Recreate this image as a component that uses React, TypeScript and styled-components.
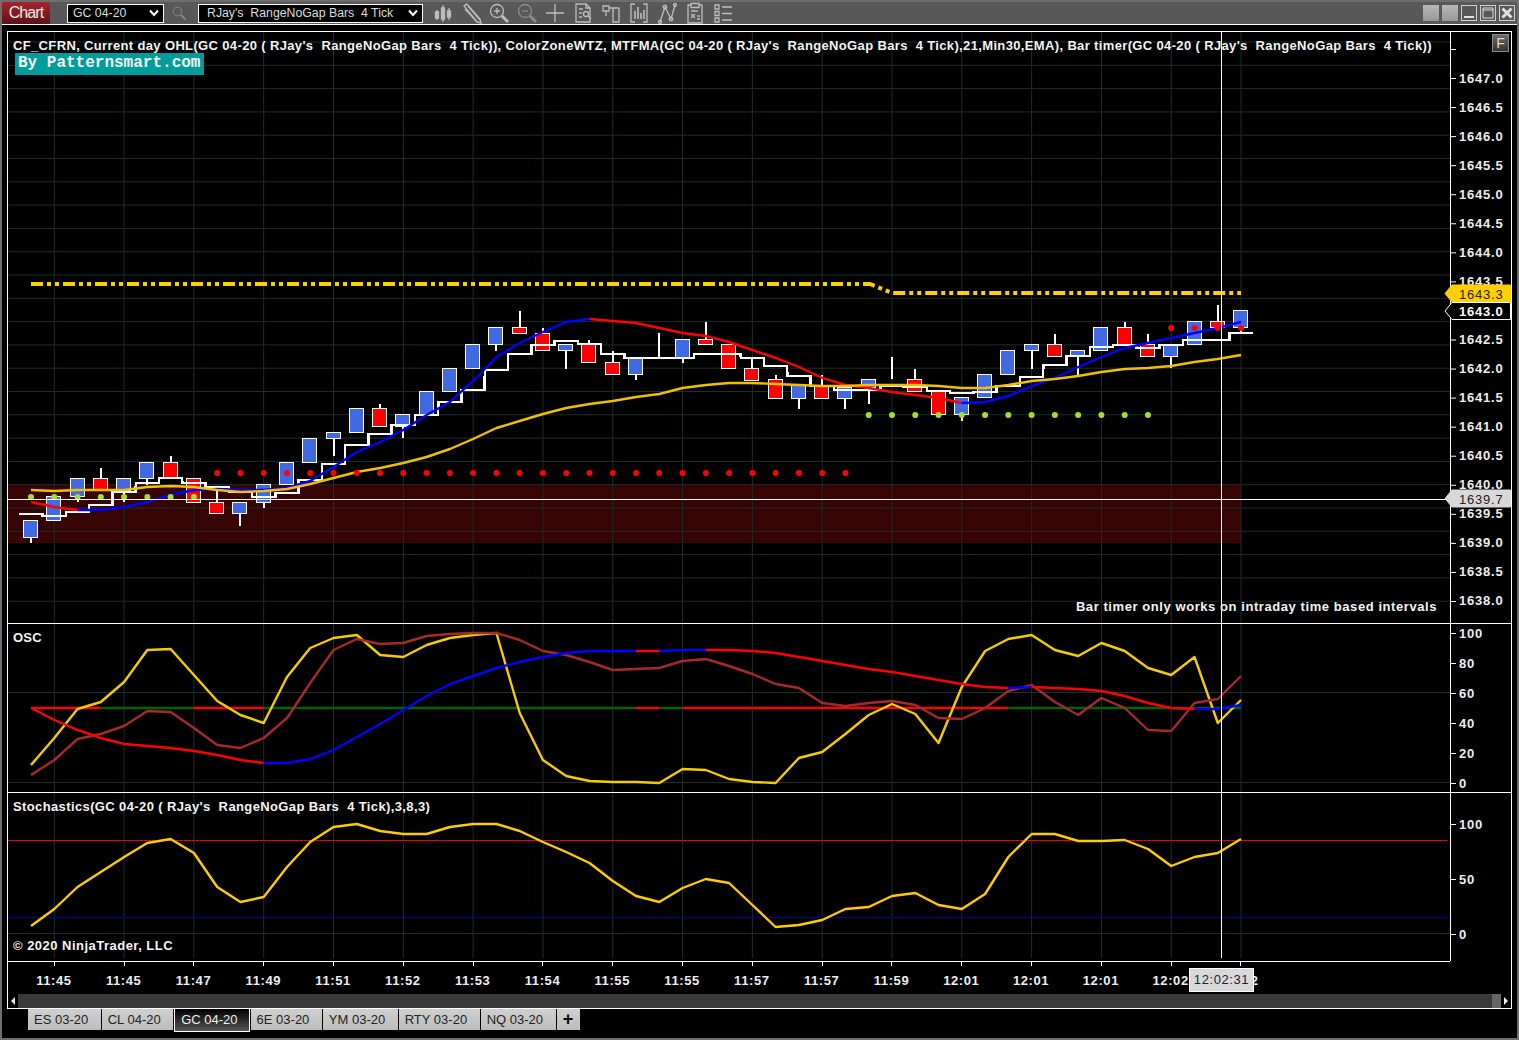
import React from 'react';
import styled, { createGlobalStyle } from 'styled-components';

const GlobalStyle = createGlobalStyle`
  html, body {
    margin: 0;
    padding: 0;
    background: #000;
    font-family: "Liberation Sans", Arial, sans-serif;
  }
`;

// bars sit every 23.27px, the grid and the time labels every third bar
const bx = (i: number) => 31 + 23.27 * i;
const gridXs = Array.from({ length: 18 }, (_, k) => 54.27 + 69.81 * k);
const CROSS_X = 1221.5;
const priceY = (p: number) => 78.5 + (1647 - p) * 58.11;

type Candle = { up: boolean; top: number; bottom: number; hi?: number; lo?: number };

const candles: Candle[] = [
  { up: true, top: 520, bottom: 537, lo: 543 },
  { up: true, top: 496, bottom: 520 },
  { up: true, top: 478, bottom: 496, lo: 502 },
  { up: false, top: 478, bottom: 490, hi: 468 },
  { up: true, top: 478, bottom: 490, lo: 502 },
  { up: true, top: 462, bottom: 478, lo: 485 },
  { up: false, top: 462, bottom: 478, hi: 456 },
  { up: false, top: 478, bottom: 502 },
  { up: false, top: 502, bottom: 513, hi: 490 },
  { up: true, top: 502, bottom: 513, lo: 526 },
  { up: true, top: 484, bottom: 502, lo: 508 },
  { up: true, top: 462, bottom: 484 },
  { up: true, top: 438, bottom: 462 },
  { up: true, top: 432, bottom: 438, lo: 456 },
  { up: true, top: 408, bottom: 432 },
  { up: false, top: 408, bottom: 426, hi: 404 },
  { up: true, top: 414, bottom: 426, lo: 438 },
  { up: true, top: 391, bottom: 414 },
  { up: true, top: 368, bottom: 391 },
  { up: true, top: 344, bottom: 368 },
  { up: true, top: 327, bottom: 344, lo: 351 },
  { up: false, top: 327, bottom: 333, hi: 311 },
  { up: false, top: 333, bottom: 350, hi: 328 },
  { up: true, top: 344, bottom: 350, lo: 369 },
  { up: false, top: 344, bottom: 362, hi: 340 },
  { up: false, top: 362, bottom: 374, hi: 351 },
  { up: true, top: 358, bottom: 374, lo: 380 },
  { up: true, top: 356, bottom: 356, hi: 333, lo: 358 },
  { up: true, top: 339, bottom: 357, lo: 363 },
  { up: false, top: 339, bottom: 344, hi: 322 },
  { up: false, top: 344, bottom: 368 },
  { up: false, top: 368, bottom: 380, hi: 357 },
  { up: false, top: 379, bottom: 398, hi: 375 },
  { up: true, top: 385, bottom: 398, lo: 409 },
  { up: false, top: 386, bottom: 398, hi: 375 },
  { up: true, top: 387, bottom: 398, lo: 409 },
  { up: true, top: 379, bottom: 387, lo: 404 },
  { up: true, top: 379, bottom: 379, hi: 357 },
  { up: false, top: 379, bottom: 391, hi: 369 },
  { up: false, top: 391, bottom: 414 },
  { up: true, top: 397, bottom: 414, lo: 421 },
  { up: true, top: 374, bottom: 397 },
  { up: true, top: 350, bottom: 374 },
  { up: true, top: 344, bottom: 350, lo: 369 },
  { up: false, top: 344, bottom: 356, hi: 334 },
  { up: true, top: 350, bottom: 356, lo: 376 },
  { up: true, top: 327, bottom: 350 },
  { up: false, top: 327, bottom: 344, hi: 322 },
  { up: false, top: 344, bottom: 356, hi: 334 },
  { up: true, top: 345, bottom: 356, lo: 368 },
  { up: true, top: 321, bottom: 344 },
  { up: false, top: 321, bottom: 327, hi: 305 },
  { up: true, top: 310, bottom: 327, lo: 332 },
];

const stepLevels = [
  514, 516, 512, 505, 492, 483, 478, 483, 487, 492, 497, 493, 480, 464, 445, 434, 425, 415, 402,
  390, 370, 354, 345, 341, 344, 354, 358, 358, 358, 354, 354, 358, 366, 376, 386, 390, 390, 386,
  387, 391, 393, 392, 386, 377, 365, 356, 347, 345, 348, 345, 340, 340, 333,
];

const fastMa = [
  502, 507, 510, 510, 507, 502, 495, 490, 489, 490, 490, 488, 481, 467, 452, 442, 430, 415, 402,
  381, 357, 343, 332, 322, 319, 321, 323, 328, 333, 336, 342, 350, 358, 367, 378, 385, 388, 392,
  395, 398, 403, 402, 396, 386, 378, 367, 357, 348, 343, 338, 333, 328, 322,
];

const slowMa = [
  490, 491, 490, 490, 490, 487, 486, 487, 490, 492, 491, 489, 484, 478, 472, 468, 463, 457, 449,
  439, 428, 421, 414, 408, 404, 401, 397, 394, 388, 385, 383, 383, 384, 385, 386, 386, 385, 385,
  385, 386, 388, 388, 385, 381, 379, 376, 372, 369, 368, 366, 362, 359, 355,
];

const oscGold = [
  765, 738, 709, 702, 682, 650, 649, 675, 701, 715, 723, 677, 648, 638, 635, 655, 657, 645, 638,
  635, 633, 713, 760, 776, 781, 782, 782, 783, 769, 770, 779, 782, 783, 758, 752, 734, 715, 704,
  714, 743, 687, 651, 639, 635, 650, 656, 643, 651, 668, 675, 657, 723, 700,
];
const oscBrown = [
  775, 760, 739, 734, 726, 711, 712, 728, 745, 748, 738, 718, 683, 650, 639, 644, 643, 636, 634,
  633, 633, 640, 651, 655, 662, 670, 669, 668, 661, 659, 666, 674, 684, 688, 703, 706, 703, 701,
  705, 718, 719, 708, 691, 685, 702, 715, 698, 708, 730, 731, 703, 699, 676,
];
const oscLine = [
  708, 720, 730, 738, 744, 746, 748, 751, 755, 760, 763, 763, 759, 750, 737, 724, 710, 696, 684,
  676, 668, 662, 657, 653, 651, 651, 651, 651, 650, 650, 650, 651, 653, 657, 661, 665, 669, 672,
  676, 680, 684, 687, 688, 687, 688, 689, 691, 696, 703, 708, 709, 709, 705,
];
const stochGold = [
  926, 909, 887, 872, 857, 843, 839, 853, 887, 902, 897, 867, 842, 827, 824, 831, 834, 834, 827,
  824, 824, 831, 842, 852, 863, 881, 896, 902, 888, 879, 883, 905, 927, 925, 920, 909, 907, 896,
  893, 905, 909, 894, 857, 834, 834, 841, 841, 840, 849, 866, 857, 853, 839,
];

type Segment = [number, number, string];

const oscLineColors: Segment[] = [
  [0, 10, '#ff0000'], [10, 26, '#0000ff'], [26, 27, '#ff0000'], [27, 29, '#0000ff'],
  [29, 42, '#ff0000'], [42, 43, '#0000ff'], [43, 50, '#ff0000'], [50, 52, '#0000ff'],
];
const oscMidColors: Segment[] = [
  [0, 3, '#ff0000'], [3, 7, '#006400'], [7, 10, '#ff0000'], [10, 26, '#006400'],
  [26, 27, '#ff0000'], [27, 28, '#006400'], [28, 42, '#ff0000'], [42, 52, '#006400'],
];
const fastMaColors: Segment[] = [
  [0, 2, '#ff0000'], [2, 24, '#0000ff'], [24, 40, '#ff0000'], [40, 52, '#0000ff'],
];

const points = (values: number[], from = 0, to = values.length - 1) =>
  values
    .slice(from, to + 1)
    .map((v, k) => `${bx(from + k).toFixed(1)},${v}`)
    .join(' ');

const stepPoints = stepLevels
  .flatMap((v, i) => [`${(bx(i) - 11.6).toFixed(1)},${v}`, `${(bx(i) + 11.6).toFixed(1)},${v}`])
  .join(' ');

const range = (a: number, b: number) => Array.from({ length: b - a + 1 }, (_, k) => a + k);

const priceLabels = range(0, 18).map((k) => 1647 - k * 0.5);
const priceGrid = range(0, 24).map((k) => 42 + 23.3 * k);
const timeLabels = [
  '11:45', '11:45', '11:47', '11:49', '11:51', '11:52', '11:53', '11:54', '11:55',
  '11:55', '11:57', '11:57', '11:59', '12:01', '12:01', '12:01', '12:02', '12:02',
];
const tabs = ['ES 03-20', 'CL 04-20', 'GC 04-20', '6E 03-20', 'YM 03-20', 'RTY 03-20', 'NQ 03-20'];

const Line = ({ values, color, width = 2.4 }: { values: number[]; color: string; width?: number }) => (
  <polyline points={points(values)} fill="none" stroke={color} strokeWidth={width} strokeLinejoin="round" />
);

const Segments = ({ values, parts }: { values: number[]; parts: Segment[] }) => (
  <>
    {parts.map(([from, to, color]) => (
      <polyline key={from} points={points(values, from, to)} fill="none" stroke={color} strokeWidth={2.4} />
    ))}
  </>
);

const VerticalGrid = ({ top, bottom }: { top: number; bottom: number }) => (
  <>
    {gridXs.map((x) => (
      <line key={x} x1={x} x2={x} y1={top} y2={bottom} stroke="#1d2e2b" />
    ))}
  </>
);

const AxisLabel = ({ y, text }: { y: number; text: string }) => (
  <>
    <line x1={1450} x2={1456} y1={y} y2={y} stroke="#fff" />
    <AxisText x={1459} y={y + 4}>
      {text}
    </AxisText>
  </>
);

const PriceTag = ({ y, fill, text, ink, bold }: { y: number; fill: string; text: string; ink: string; bold?: boolean }) => (
  <>
    <polygon
      points={`1445,${y + 8.5} 1452,${y} 1510.5,${y} 1510.5,${y + 17} 1452,${y + 17}`}
      fill={fill}
      stroke={fill === '#000' ? '#fff' : fill}
    />
    <TagText x={1459} y={y + 13.500} fill={ink} $bold={bold}>
      {text}
    </TagText>
  </>
);

const Crosshair = ({ top, bottom }: { top: number; bottom: number }) => (
  <line x1={CROSS_X} x2={CROSS_X} y1={top} y2={bottom} stroke="#fff" />
);

const PricePlot = () => (
  <PlotSvg viewBox="8 32 1503 591">
    <rect x={8} y={484.5} width={1233} height={58.5} fill="#370404" />
    {priceGrid.map((y) => (
      <line key={y} x1={8} x2={1450} y1={y} y2={y} stroke="#1d2e2b" />
    ))}
    <VerticalGrid top={32} bottom={623} />

    <polyline
      points="31,284 870,284 892,293 1241,293"
      fill="none"
      stroke="#ffd000"
      strokeWidth={4}
      strokeDasharray="12 4 4 4 4 4"
    />

    {candles.map((c, i) => {
      const x = Math.round(bx(i));
      return (
        <g key={i} shapeRendering="crispEdges">
          {c.hi !== undefined && <line x1={x} x2={x} y1={c.hi} y2={c.top} stroke="#fff" strokeWidth={2} />}
          {c.lo !== undefined && <line x1={x} x2={x} y1={c.bottom} y2={c.lo} stroke="#fff" strokeWidth={2} />}
          <rect
            x={x - 7.5}
            y={c.top + 0.5}
            width={14}
            height={Math.max(c.bottom - c.top, 0)}
            fill={c.up ? '#4169e1' : '#ff0000'}
            stroke="#fff"
          />
        </g>
      );
    })}

    <polyline points={stepPoints} fill="none" stroke="#fff" strokeWidth={2.5} shapeRendering="crispEdges" />
    <Segments values={fastMa} parts={fastMaColors} />
    <Line values={slowMa} color="#f0c000" />

    {range(8, 35).map((i) => (
      <circle key={i} cx={bx(i)} cy={473} r={3} fill="#ff0000" />
    ))}
    {range(49, 52).map((i) => (
      <circle key={i} cx={bx(i)} cy={328} r={3} fill="#ff0000" />
    ))}
    {range(0, 7).map((i) => (
      <circle key={i} cx={bx(i)} cy={497} r={3} fill="#a2e02a" />
    ))}
    {range(36, 48).map((i) => (
      <circle key={i} cx={bx(i)} cy={415} r={3} fill="#a2e02a" />
    ))}

    <line x1={8} x2={1450} y1={499.5} y2={499.5} stroke="#fff" />
    <Crosshair top={32} bottom={623} />
    <line x1={1450.5} x2={1450.5} y1={32} y2={623} stroke="#fff" />

    <line x1={1450} x2={1456} y1={49.5} y2={49.5} stroke="#fff" />
    {priceLabels.map((p) => (
      <AxisLabel key={p} y={priceY(p)} text={p.toFixed(1)} />
    ))}

    <PriceTag y={285} fill="#ffd000" text="1643.3" ink="#222" />
    <PriceTag y={302.5} fill="#000" text="1643.0" ink="#fff" bold />
    <PriceTag y={490} fill="#d8d8d8" text="1639.7" ink="#222" />
  </PlotSvg>
);

const OscPlot = () => (
  <PlotSvg viewBox="8 624 1503 168">
    <line x1={8} x2={1450} y1={692.5} y2={692.5} stroke="#1d2e2b" />
    <line x1={8} x2={1450} y1={782.5} y2={782.5} stroke="#1d2e2b" />
    <VerticalGrid top={624} bottom={792} />
    <Segments values={range(0, 52).map(() => 708)} parts={oscMidColors} />
    <Line values={oscGold} color="#f5cc00" />
    <Line values={oscBrown} color="#a52a2a" />
    <Segments values={oscLine} parts={oscLineColors} />
    <Crosshair top={624} bottom={792} />
    <line x1={1450.5} x2={1450.5} y1={624} y2={792} stroke="#fff" />
    {[100, 80, 60, 40, 20, 0].map((v, k) => (
      <AxisLabel key={v} y={633.5 + 30 * k} text={String(v)} />
    ))}
  </PlotSvg>
);

const StochPlot = () => (
  <PlotSvg viewBox="8 793 1503 168">
    <line x1={8} x2={1450} y1={933.5} y2={933.5} stroke="#1d2e2b" />
    <VerticalGrid top={793} bottom={958} />
    <line x1={8} x2={1448} y1={840.5} y2={840.5} stroke="#ff0000" strokeDasharray="3 1" />
    <line x1={8} x2={1448} y1={917.5} y2={917.5} stroke="#0000a0" strokeDasharray="3 1" />
    <Line values={stochGold} color="#ffcc00" />
    <Crosshair top={793} bottom={958} />
    <line x1={1450.5} x2={1450.5} y1={793} y2={961} stroke="#fff" />
    {[100, 50, 0].map((v, k) => (
      <AxisLabel key={v} y={824.5 + 55 * k} text={String(v)} />
    ))}
  </PlotSvg>
);

const ToolIcon = ({ children, dim }: { children: React.ReactNode; dim?: boolean }) => (
  <IconSvg viewBox="0 0 22 22" $dim={dim}>
    {children}
  </IconSvg>
);

const Chevron = () => (
  <ChevronSvg viewBox="0 0 10 8">
    <polyline points="1,1.5 5,6 9,1.5" fill="none" stroke="#fff" strokeWidth={2} />
  </ChevronSvg>
);

const App = () => {
  return (
    <Window>
      <GlobalStyle />
      <TitleBar>
        <ChartButton>Chart</ChartButton>
        <Combo $width={97}>
          GC 04-20
          <Chevron />
        </Combo>
        <SearchSlot>
          <ToolIcon dim>
            <circle cx="9" cy="9" r="6" />
            <path d="M13.5 13.5L20 20" strokeWidth="2.4" />
          </ToolIcon>
        </SearchSlot>
        <Combo $width={225}>
          RJay's&nbsp; RangeNoGap Bars&nbsp; 4 Tick
          <Chevron />
        </Combo>
        <IconRow>
          <ToolIcon>
            <path d="M5 8v10M11 3v17M17 6v12" />
            <path d="M3.5 10h3v6h-3zM9.500 6h3v11h-3zM15.500 9h3v6h-3z" fill="#bbb" />
          </ToolIcon>
          <ToolIcon>
            <path d="M4 4l3-2 13 15 1 4-4-1z" />
            <path d="M5 7l12 13M8 4l12 14M4 4l3-2" />
          </ToolIcon>
          <ToolIcon>
            <circle cx="9" cy="9" r="6.500" />
            <path d="M6 9h6M9 6v6" />
            <path d="M14 14l6 6" strokeWidth="3" />
          </ToolIcon>
          <ToolIcon dim>
            <circle cx="9" cy="9" r="6.500" />
            <path d="M6 9h6" />
            <path d="M14 14l6 6" strokeWidth="3" />
          </ToolIcon>
          <ToolIcon>
            <path d="M11 2v18M2 11h18" />
          </ToolIcon>
          <ToolIcon>
            <path d="M14 2H4v18h14V6zM14 2v4h4" />
            <path d="M7 7h4M7 11h3M7 15h3" />
            <circle cx="14" cy="12" r="2.500" />
            <path d="M16 14l3 3" />
          </ToolIcon>
          <ToolIcon>
            <path d="M3 4h6v5H3zM9 6h10M13 6v14h6V6" />
            <path d="M6 9v5" />
          </ToolIcon>
          <ToolIcon>
            <path d="M7 2H3v18h4M15 2h4v18h-4" />
            <path d="M7 17V9M10 17V5M13 17v-6M16 17V8" strokeWidth="1.600" />
          </ToolIcon>
          <ToolIcon>
            <path d="M4 20L9 5l6 12 4-14" />
            <circle cx="9" cy="5" r="1.800" />
            <circle cx="15" cy="17" r="1.800" />
            <circle cx="19" cy="3" r="1.500" />
            <circle cx="4" cy="20" r="1.500" />
          </ToolIcon>
          <ToolIcon>
            <path d="M7 3H4v18h14V3h-3" />
            <path d="M7 1.500h8v4H7z" />
            <path d="M7 9h7M7 12l4 4M11 12l-4 4M13 14h3M13 17h3" />
          </ToolIcon>
          <ToolIcon>
            <path d="M3 3h4v4H3zM3 9.500h4v4H3zM3 16h4v4H3z" />
            <path d="M10 5h10M10 11.500h10M10 18h10" />
          </ToolIcon>
        </IconRow>
        <WindowButtons>
          <WindowButton $filled />
          <WindowButton $filled />
          <WindowButton>
            <ButtonGlyph viewBox="0 0 14 14">
              <path d="M2 11h10" strokeWidth="2" />
            </ButtonGlyph>
          </WindowButton>
          <WindowButton>
            <ButtonGlyph viewBox="0 0 14 14">
              <path d="M2 2h10v10H2zM2 4h10" />
            </ButtonGlyph>
          </WindowButton>
          <WindowButton>
            <ButtonGlyph viewBox="0 0 14 14">
              <path d="M2.500 2.500l9 9M11.500 2.500l-9 9" strokeWidth="3" />
            </ButtonGlyph>
          </WindowButton>
        </WindowButtons>
      </TitleBar>

      <ChartFrame>
        <PricePanel>
          <PricePlot />
          <TopLegend>
            <IndicatorList>
              CF_CFRN, Current day OHL(GC 04-20 ( RJay's&nbsp; RangeNoGap Bars&nbsp; 4 Tick)), ColorZoneWTZ,
              MTFMA(GC 04-20 ( RJay's&nbsp; RangeNoGap Bars&nbsp; 4 Tick),21,Min30,EMA), Bar timer(GC 04-20 (
              RJay's&nbsp; RangeNoGap Bars&nbsp; 4 Tick))
            </IndicatorList>
            <VendorBadge>By Patternsmart.com</VendorBadge>
          </TopLegend>
          <FormatButton>F</FormatButton>
          <BarTimerNote>Bar timer only works on intraday time based intervals</BarTimerNote>
        </PricePanel>
        <OscPanel>
          <OscPlot />
          <PanelLabel $tracking={0.2}>OSC</PanelLabel>
        </OscPanel>
        <OscPanel>
          <StochPlot />
          <PanelLabel $tracking={0.38}>
            Stochastics(GC 04-20 ( RJay's&nbsp; RangeNoGap Bars&nbsp; 4 Tick),3,8,3)
          </PanelLabel>
          <Copyright $tracking={0.48}>© 2020 NinjaTrader, LLC</Copyright>
        </OscPanel>
        <TimeAxis>
          <TimeTrack>
            {timeLabels.map((t, i) => (
              <TimeSlot key={i}>{t}</TimeSlot>
            ))}
          </TimeTrack>
          <TimeCursor>12:02:31</TimeCursor>
        </TimeAxis>
        <ScrollBar>
          <ScrollEnd>
            <ArrowSvg viewBox="0 0 6 8">
              <polygon points="5,0 5,8 1,4" />
            </ArrowSvg>
          </ScrollEnd>
          <ScrollThumb />
          <ScrollEnd>
            <ArrowSvg viewBox="0 0 6 8">
              <polygon points="1,0 1,8 5,4" />
            </ArrowSvg>
          </ScrollEnd>
        </ScrollBar>
      </ChartFrame>

      <TabStrip>
        {tabs.map((t) => (
          <Tab key={t} $active={t === 'GC 04-20'}>
            {t}
          </Tab>
        ))}
        <AddTab>+</AddTab>
      </TabStrip>
    </Window>
  );
};

const Window = styled.div`
  box-sizing: border-box;
  width: 1519px;
  height: 1040px;
  border: 2px solid #6e6e6e;
  background: #000;
  display: flex;
  flex-direction: column;
  overflow: hidden;
`;

const TitleBar = styled.div`
  box-sizing: border-box;
  flex: none;
  height: 23px;
  background: #585858;
  border-bottom: 1px solid #fff;
  display: flex;
  align-items: center;
`;

const ChartButton = styled.div`
  width: 48px;
  height: 22px;
  flex: none;
  display: flex;
  align-items: center;
  justify-content: center;
  background: linear-gradient(#a3262c, #5e1216);
  color: #f0e8e8;
  font-size: 16px;
  letter-spacing: -0.9px;
`;

const Combo = styled.div<{ $width: number }>`
  box-sizing: border-box;
  width: ${(p) => p.$width}px;
  height: 19px;
  margin-left: 17px;
  padding: 0 4px 0 5px;
  flex: none;
  display: flex;
  align-items: center;
  justify-content: space-between;
  background: #000;
  border: 1px solid #fff;
  color: #ddd;
  font-size: 12.300px;
  white-space: nowrap;

  & + div + & {
    margin-left: 11px;
    padding-left: 8px;
  }
`;

const ChevronSvg = styled.svg`
  width: 10px;
  height: 8px;
`;

const SearchSlot = styled.div`
  width: 16px;
  height: 16px;
  margin-left: 7px;
  flex: none;
  display: flex;

  svg {
    width: 16px;
    height: 16px;
  }
`;

const IconRow = styled.div`
  display: flex;
  gap: 6px;
  margin-left: 9px;
  flex: none;
`;

const IconSvg = styled.svg<{ $dim?: boolean }>`
  width: 22px;
  height: 22px;
  fill: none;
  stroke: ${(p) => (p.$dim ? '#8c8c8c' : '#bdbdbd')};
  stroke-width: 1.3;
`;

const WindowButtons = styled.div`
  margin-left: auto;
  margin-right: 2px;
  display: flex;
  gap: 3px;
`;

const WindowButton = styled.div<{ $filled?: boolean }>`
  box-sizing: border-box;
  width: 16px;
  height: 16px;
  background: ${(p) => (p.$filled ? 'linear-gradient(#b8b8b8, #989898)' : '#585858')};
  border: ${(p) => (p.$filled ? 'none' : '1px solid #d0d0d0')};
`;

const ButtonGlyph = styled.svg`
  display: block;
  width: 14px;
  height: 14px;
  fill: none;
  stroke: #e0e0e0;
  stroke-width: 1;
`;

const ChartFrame = styled.div`
  flex: none;
  box-sizing: border-box;
  width: 1505px;
  height: 978px;
  margin: 6px 5px 0;
  border: 1px solid #fff;
  background: #000;
  display: flex;
  flex-direction: column;
`;

const PricePanel = styled.div`
  position: relative;
  flex: none;
  height: 591px;
`;

const OscPanel = styled.div`
  position: relative;
  flex: none;
  height: 168px;
  border-top: 1px solid #fff;
`;

const PlotSvg = styled.svg`
  display: block;
  width: 100%;
  height: 100%;
`;

const AxisText = styled.text`
  fill: #eee;
  font-family: "Liberation Sans", Arial, sans-serif;
  font-size: 13px;
  font-weight: 700;
  letter-spacing: 0.8px;
`;

const TagText = styled.text<{ $bold?: boolean }>`
  font-family: "Liberation Sans", Arial, sans-serif;
  font-size: 13px;
  font-weight: ${(p) => (p.$bold ? 700 : 400)};
  letter-spacing: 0.8px;
`;

const TopLegend = styled.div`
  position: absolute;
  top: 6px;
  left: 5px;
  right: 60px;
`;

const IndicatorList = styled.div`
  color: #f4f4f4;
  font-size: 13px;
  font-weight: 700;
  line-height: 16px;
  letter-spacing: 0.355px;
  white-space: nowrap;
`;

const VendorBadge = styled.div`
  width: 189px;
  height: 22px;
  margin: -1px 0 0 2px;
  box-sizing: border-box;
  padding-left: 3px;
  background: #009b9b;
  color: #f8f8f8;
  font-family: "Liberation Mono", monospace;
  font-size: 16px;
  font-weight: 700;
  line-height: 20px;
  white-space: nowrap;
`;

const FormatButton = styled.div`
  position: absolute;
  top: 2px;
  right: 2px;
  box-sizing: border-box;
  width: 17px;
  height: 18px;
  background: linear-gradient(#6a6a6a, #333);
  border: 1px solid #8a8a8a;
  color: #e8d8c8;
  font-size: 14px;
  line-height: 16px;
  text-align: center;
`;

const BarTimerNote = styled.div`
  position: absolute;
  top: 567px;
  right: 74px;
  color: #f4f4f4;
  font-size: 13px;
  font-weight: 700;
  line-height: 16px;
  letter-spacing: 0.57px;
  white-space: nowrap;
`;

const PanelLabel = styled.div<{ $tracking: number }>`
  position: absolute;
  top: 6px;
  left: 5px;
  color: #f4f4f4;
  font-size: 13px;
  font-weight: 700;
  line-height: 16px;
  letter-spacing: ${(p) => p.$tracking}px;
  white-space: nowrap;
`;

const Copyright = styled(PanelLabel)`
  top: auto;
  bottom: 7px;
`;

const TimeAxis = styled.div`
  position: relative;
  flex: none;
  height: 33px;
`;

const TimeTrack = styled.div`
  box-sizing: border-box;
  width: 1442px;
  height: 33px;
  padding-left: 11px;
  border-top: 1px solid #fff;
  display: flex;
`;

const TimeSlot = styled.div`
  position: relative;
  flex: none;
  width: 69.810px;
  line-height: 38px;
  text-align: center;
  color: #eee;
  font-size: 13px;
  font-weight: 700;
  letter-spacing: 0.6px;

  &::before {
    content: '';
    position: absolute;
    top: 0;
    left: 50%;
    width: 1px;
    height: 4px;
    background: #fff;
  }
`;

const TimeCursor = styled.div`
  position: absolute;
  top: 7px;
  left: 1181px;
  box-sizing: border-box;
  width: 65px;
  height: 24px;
  background: #d8d8d8;
  border: 1px solid #fff;
  color: #14204a;
  font-size: 13px;
  line-height: 22px;
  letter-spacing: 0.6px;
  text-align: center;
`;

const ScrollBar = styled.div`
  flex: none;
  height: 14px;
  background: #3a3a3a;
  display: flex;
  justify-content: space-between;
  position: relative;
`;

const ScrollEnd = styled.div`
  width: 10px;
  background: #000;
  display: flex;
  align-items: center;
  justify-content: center;
`;

const ScrollThumb = styled.div`
  position: absolute;
  right: 10px;
  top: 0;
  bottom: 0;
  width: 9px;
  background: #666;
`;

const ArrowSvg = styled.svg`
  width: 6px;
  height: 8px;
  fill: #eee;
`;

const TabStrip = styled.div`
  flex: none;
  display: flex;
  gap: 1px;
  padding-left: 26px;
  align-items: flex-start;
`;

const Tab = styled.div<{ $active?: boolean }>`
  box-sizing: border-box;
  height: ${(p) => (p.$active ? 23 : 21)}px;
  padding: 0 ${(p) => (p.$active ? 11 : 12.5)}px 0 6px;
  background: ${(p) => (p.$active ? 'linear-gradient(#000, #555)' : 'linear-gradient(#d0d0d0, #bcbcbc)')};
  border: ${(p) => (p.$active ? '1px solid #fff' : 'none')};
  border-top: none;
  color: ${(p) => (p.$active ? '#eee' : '#222')};
  font-size: 13px;
  line-height: 21px;
  white-space: nowrap;
`;

const AddTab = styled(Tab)`
  width: 23px;
  padding: 0;
  text-align: center;
  color: #000;
  font-size: 18px;
  font-weight: 700;
`;

export default App;
